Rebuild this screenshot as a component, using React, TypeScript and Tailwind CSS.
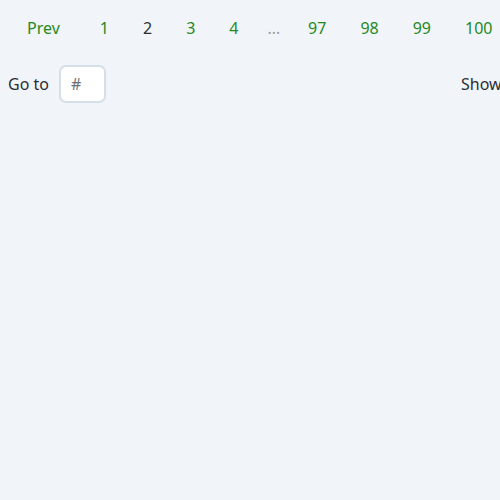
import React from "react";

export default function App() {
  const pages: { label: string; current?: boolean; ellipsis?: boolean }[] = [
    { label: "1" },
    { label: "2", current: true },
    { label: "3" },
    { label: "4" },
    { label: "…", ellipsis: true },
    { label: "97" },
    { label: "98" },
    { label: "99" },
    { label: "100" },
  ];
  return (
    <div
      className="min-h-screen w-full overflow-hidden bg-[#f1f4f8] text-[16px] text-[#2b2f33]"
      style={{ fontFamily: '"Noto Sans", "Open Sans", sans-serif' }}
    >
      <nav className="flex items-center whitespace-nowrap pl-[11px] pt-[16px] gap-[2px]">
        <button className="px-4 h-[24px] leading-[24px] text-[#1f8a1f] mr-[6px]">Prev</button>
        {pages.map((p, i) =>
          p.ellipsis ? (
            <span key={i} className="pl-[11px] pr-[10px] h-[24px] leading-[24px] text-[#9aa0a7]">
              {p.label}
            </span>
          ) : (
            <button
              key={i}
              className={
                "px-4 h-[24px] leading-[24px] " +
                (p.current ? "text-[#2b2f33]" : "text-[#1f8a1f]")
              }
            >
              {p.label}
            </button>
          )
        )}
      </nav>
      <div className="flex items-center whitespace-nowrap pl-[8px] mt-[25px]">
        <div className="flex items-center gap-[10px] shrink-0">
          <span>Go to</span>
          <input
            placeholder="#"
            className="w-[47px] h-[38px] rounded-[7px] border-2 border-[#d6dfe8] bg-white px-[10px] text-[16px] text-[#2b2f33] placeholder:text-[#6b7077] outline-none"
          />
        </div>
        <div className="flex items-center gap-2 ml-[355px] shrink-0">
          <span>Show</span>
          <select className="h-[38px] rounded-[7px] border-2 border-[#d6dfe8] bg-white px-2">
            <option>10</option>
          </select>
          <span>per page</span>
        </div>
      </div>
    </div>
  );
}
